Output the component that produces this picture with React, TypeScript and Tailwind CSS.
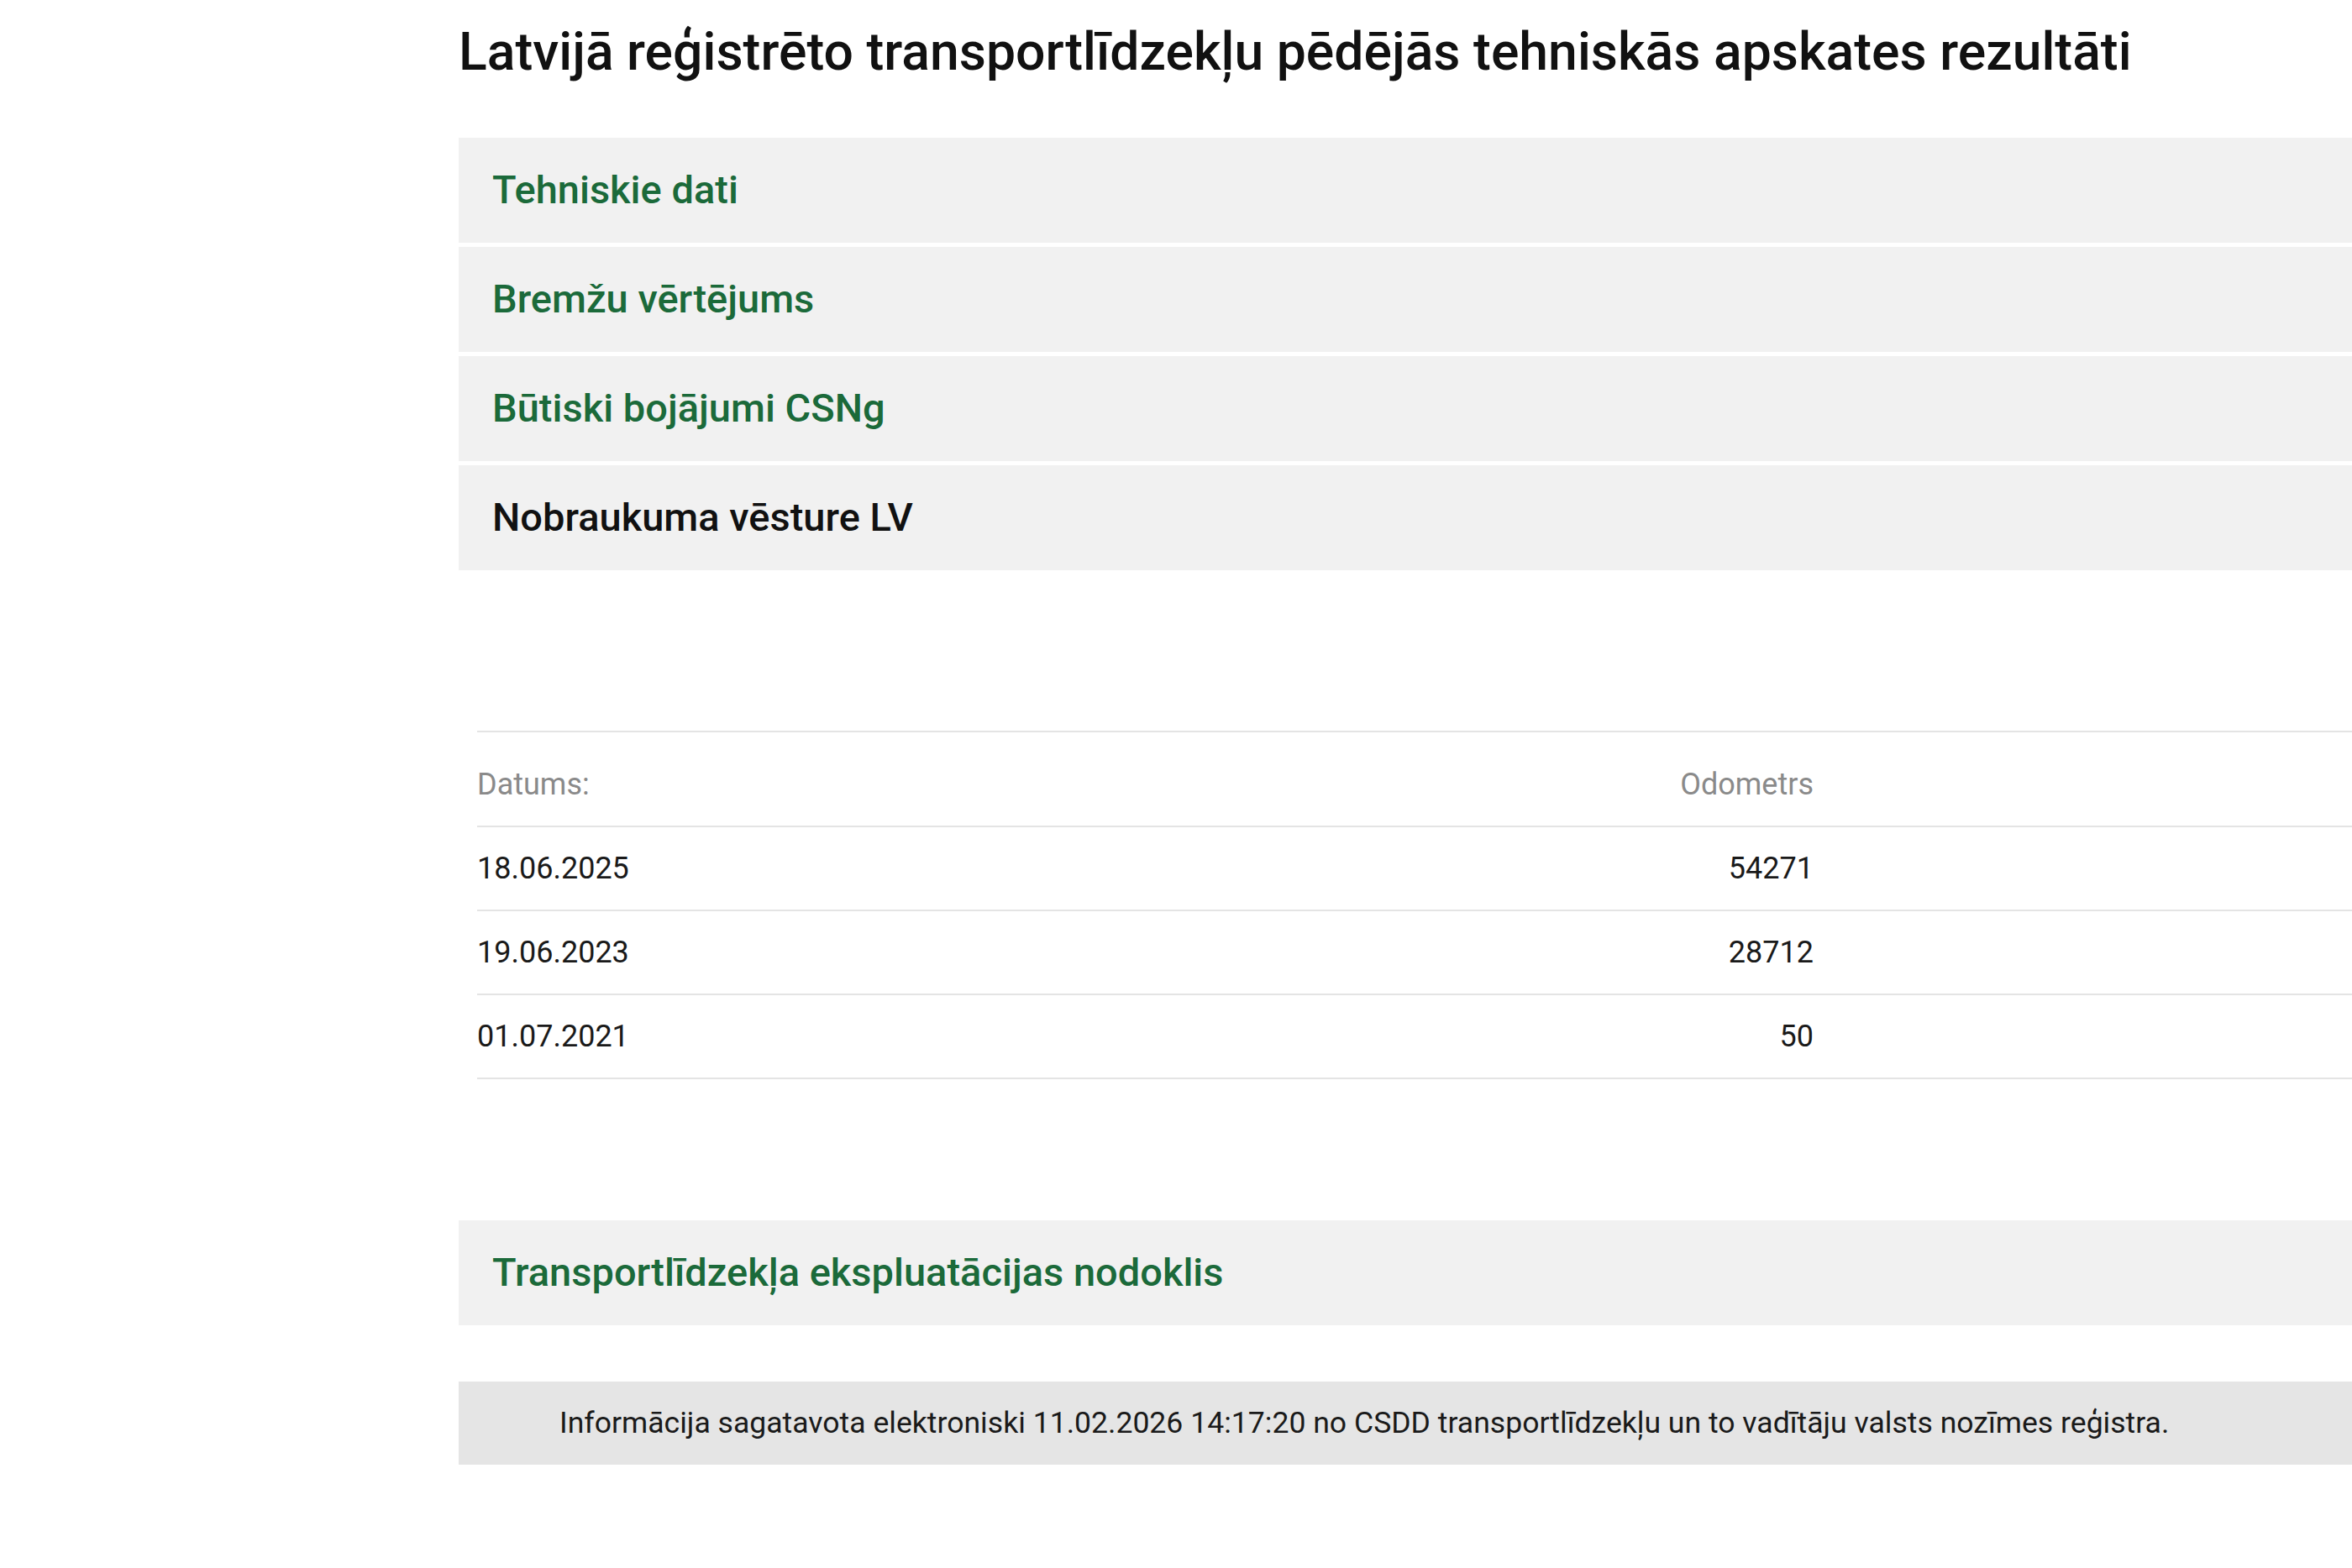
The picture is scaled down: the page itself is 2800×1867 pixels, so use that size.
const SECTIONS_TOP = [
  { label: 'Tehniskie dati', green: true },
  { label: 'Bremžu vērtējums', green: true },
  { label: 'Būtiski bojājumi CSNg', green: true },
  { label: 'Nobraukuma vēsture LV', green: false },
]

const MILEAGE = [
  { date: '18.06.2025', km: '54271' },
  { date: '19.06.2023', km: '28712' },
  { date: '01.07.2021', km: '50' },
]

function SectionRow({ label, green }: { label: string; green: boolean }) {
  return (
    <div className="flex items-center h-[125px] pl-[40px] bg-[#f1f1f1]">
      <span className={`text-[47px] font-medium ${green ? 'text-[#1b6a3a]' : 'text-[#111]'}`}>{label}</span>
    </div>
  )
}

export default function App() {
  return (
    <div className="min-h-[1867px] bg-white flex" style={{ fontFamily: 'Roboto, "Noto Sans", sans-serif' }}>
      <div className="ml-[546px] flex-1 flex flex-col">
        {/* Title */}
        <h1 className="mt-[28px] mb-[68px] text-[62.5px] leading-[68px] font-medium text-[#111] whitespace-nowrap">
          Latvijā reģistrēto transportlīdzekļu pēdējās tehniskās apskates rezultāti
        </h1>

        {/* Accordion */}
        <div className="flex flex-col gap-[5px]">
          {SECTIONS_TOP.map((s) => (
            <SectionRow key={s.label} label={s.label} green={s.green} />
          ))}
        </div>

        {/* Mileage table */}
        <div className="mt-[191px] ml-[22px] border-t-2 border-[#e4e4e4]">
          <div className="flex items-end h-[113px] pb-[22px] border-b-2 border-[#e4e4e4] text-[36px] text-[#8a8a8a]">
            <div className="w-[800px]">Datums:</div>
            <div className="w-[791px] text-right">Odometrs</div>
          </div>
          {MILEAGE.map((r) => (
            <div key={r.date} className="flex items-center h-[100px] border-b-2 border-[#e4e4e4] text-[36px] text-[#1a1a1a]">
              <div className="w-[800px]">{r.date}</div>
              <div className="w-[791px] text-right">{r.km}</div>
            </div>
          ))}
        </div>

        {/* Tax */}
        <div className="mt-[168px]">
          <SectionRow label="Transportlīdzekļa ekspluatācijas nodoklis" green />
        </div>

        {/* Footer */}
        <div className="mt-[67px] h-[99px] flex items-center pl-[120px] bg-[#e5e5e5]">
          <span className="text-[35.6px] text-[#1a1a1a] whitespace-nowrap">
            Informācija sagatavota elektroniski 11.02.2026 14:17:20 no CSDD transportlīdzekļu un to vadītāju valsts nozīmes reģistra.
          </span>
        </div>
      </div>
    </div>
  )
}
